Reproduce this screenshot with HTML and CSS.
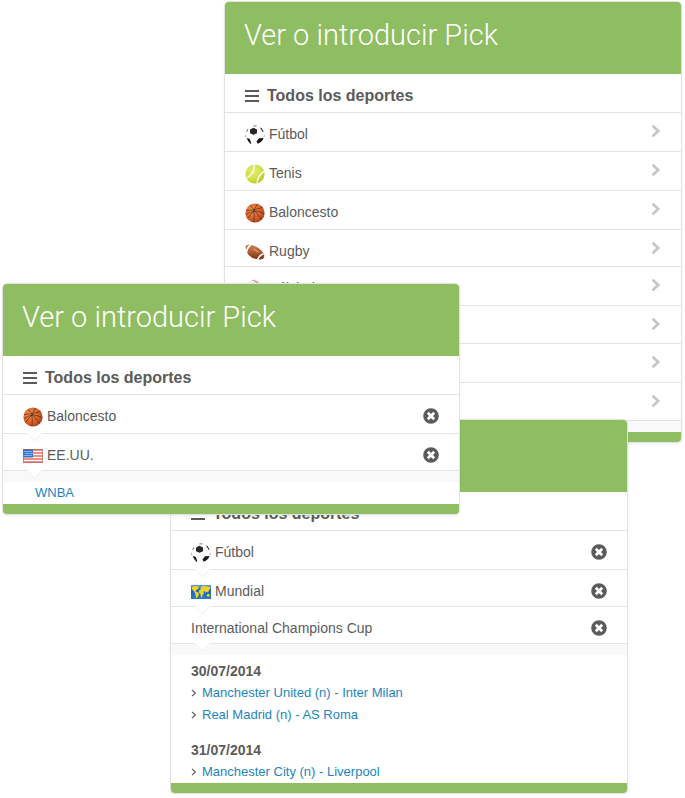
FILE: index.html
```html
<!DOCTYPE html>
<html lang="es">
<head>
<meta charset="utf-8">
<meta name="viewport" content="width=device-width, initial-scale=1">
<title>Ver o introducir Pick</title>
<link rel="stylesheet" href="styles.css">
</head>
<body>
<svg class="sprite" aria-hidden="true">
  <defs>
    <radialGradient id="g-tennis" cx=".4" cy=".35" r=".7"><stop offset="0" stop-color="#e6ee7a"/><stop offset=".7" stop-color="#cbdc3c"/><stop offset="1" stop-color="#adc02c"/></radialGradient>
    <radialGradient id="g-basket" cx=".35" cy=".35" r=".75"><stop offset="0" stop-color="#ee9550"/><stop offset=".6" stop-color="#d4602a"/><stop offset="1" stop-color="#a83a1a"/></radialGradient>
    <linearGradient id="g-rugby" x1="0" y1="0" x2="0" y2="1"><stop offset="0" stop-color="#c98258"/><stop offset=".5" stop-color="#b05c33"/><stop offset="1" stop-color="#7a2f14"/></linearGradient>
    <linearGradient id="g-sea" x1="0" y1="0" x2="0" y2="1"><stop offset="0" stop-color="#6f9fd8"/><stop offset=".4" stop-color="#1762c4"/><stop offset="1" stop-color="#2f79c4"/></linearGradient>
  </defs>
  <symbol id="i-bars" viewBox="0 0 14 12"><path d="M0 0h14v2H0zM0 5h14v2H0zM0 10h14v2H0z" fill="currentColor"/></symbol>
  <symbol id="i-chevron" viewBox="0 0 10 14"><path d="M2.4 2.4 7.2 7 2.4 11.6" fill="none" stroke="currentColor" stroke-width="2.8" stroke-linecap="round"/></symbol>
  <symbol id="i-close" viewBox="0 0 16 16"><circle cx="8" cy="8" r="7.8" fill="currentColor"/><path d="m5.8 5.8 4.4 4.4m0-4.4-4.4 4.4" stroke="#fff" stroke-width="2.8" stroke-linecap="square" fill="none"/></symbol>
  <symbol id="i-angle" viewBox="0 0 6 8"><path d="m1 .8 3.4 3.2L1 7.2" fill="none" stroke="currentColor" stroke-width="1.1"/></symbol>
  <symbol id="i-soccer" viewBox="0 0 20 20">
    <circle cx="10" cy="10" r="9.5" fill="#fcfcfc"/>
    <path d="M5 4.500 8.500 2.800l3.500 1.700v3.700L8.500 9.800 5 8.200z" fill="#262626"/>
    <path d="M7.5.9Q10-.2 12.5.9L10 1.500z" fill="#888"/>
    <path d="m1 7 2-3.6-.1 2.500zM.4 9.300l.9 3-1-.8z" fill="#666"/>
    <path d="m15 2.500 1.500.5 2.200 4-1.200-.3z" fill="#222"/>
    <path d="m1.800 12.800 3 1.200 1.500 4.500-1 .3Q2.800 17 1.800 12.800z" fill="#171717"/>
    <path d="m11.500 16.500 2.500-3.200 4.500-.3q-1.400 4.300-5.800 5.800z" fill="#171717"/>
    <path d="m19.500 9-.1 2.400-.8.8z" fill="#555"/>
  </symbol>
  <symbol id="i-tennis" viewBox="0 0 20 20">
    <circle cx="10" cy="10" r="9.6" fill="url(#g-tennis)"/>
    <path d="M2 14Q9 10.500 9.500.8M12 19.300q.5-8 7-12" fill="none" stroke="#f9fbe6" stroke-width="1.5"/>
  </symbol>
  <symbol id="i-basket" viewBox="0 0 20 20">
    <circle cx="10" cy="10" r="9.6" fill="url(#g-basket)"/>
    <path d="M1 7.500Q9 7.500 17.500 4.500M5 2Q10 8 16.500 16.500M12.500.8Q9.500 8 2.500 15.500M.8 11.500Q11 5 19.300 11M8.700 7.500Q10 13 8.800 19.300" fill="none" stroke="#54230f" stroke-opacity=".8" stroke-width=".8"/>
  </symbol>
  <symbol id="i-rugby" viewBox="0 0 20 20">
    <path d="M.6 4.100Q3 .8 10.200 4.300q7 3.600 9 8.200.8 5.500-5 4.900Q7.600 17.400 3.600 13.100.2 8.300.6 4.100z" fill="url(#g-rugby)"/>
    <path d="M5.700 2.600Q2 6 1.600 10M18.600 11.700q-4.200 1.300-5.800 5.700" fill="none" stroke="#fff" stroke-width="1.700"/>
    <path d="m8.500 7 5 3.200" stroke="#f0cdb8" stroke-width=".8"/>
  </symbol>
  <symbol id="i-baseball" viewBox="0 0 20 20">
    <circle cx="10" cy="10" r="9.5" fill="#f3efec"/>
    <path d="M7.500 1q7 2.500 11 9M1 8q6 3 8 11" fill="none" stroke="#d08a86" stroke-width="1.300"/>
  </symbol>
  <symbol id="i-usa" viewBox="0 0 20 14">
    <path d="M0 0h20v14H0z" fill="#fff"/>
    <path d="M0 1h20M0 4h20M0 7h20M0 10h20M0 13h20" stroke="#ea6a5c" stroke-width="1.500"/>
    <path d="M0 0h10v8.500H0z" fill="#2f74cc"/>
    <path d="M1.500 2.500h8M2.500 4.500h7M1.500 6.500h8" stroke="#e4eefb" stroke-width="1" stroke-dasharray="1 1"/>
    <path d="M.5.5h19v13H.5z" fill="none" stroke="#a65f62" stroke-opacity=".6"/>
  </symbol>
  <symbol id="i-world" viewBox="0 0 20 14">
    <path d="M0 0h20v14H0z" fill="url(#g-sea)"/>
    <path d="m1 2 3-1 4 .5-.8 2.300L5.500 5 4.300 6.300l2.900 1.200.8 1.700-2 3.800-1-.3-.7-4L2.700 6 1 4.200zM9.500 2.500 12 1l6.500.8 1 1.500-1.500 2-1 2.200-1.300-1-1 1.500-1.200-2-1 .8.500 1.500-1.500 2-.3 2.200-1.200-.3-.7-3.500-1.500-1 .2-2.200L10 4zM15.800 9.500l2-.7 1.200 1.700-1.200 1.200-2-.5z" fill="#f2d51c"/>
  </symbol>
</svg>

<main class="stage">
  <section class="panel panel-sports">
    <header class="panel-header"><h2>Ver o introducir Pick</h2></header>
    <h3 class="panel-title"><svg class="bars"><use href="#i-bars"/></svg>Todos los deportes</h3>
    <ul class="rows">
      <li><a class="row" href="#futbol"><svg class="ball"><use href="#i-soccer"/></svg><span>Fútbol</span><svg class="chevron"><use href="#i-chevron"/></svg></a></li>
      <li><a class="row" href="#tenis"><svg class="ball"><use href="#i-tennis"/></svg><span>Tenis</span><svg class="chevron"><use href="#i-chevron"/></svg></a></li>
      <li><a class="row" href="#baloncesto"><svg class="ball"><use href="#i-basket"/></svg><span>Baloncesto</span><svg class="chevron"><use href="#i-chevron"/></svg></a></li>
      <li><a class="row row-short" href="#rugby"><svg class="ball"><use href="#i-rugby"/></svg><span>Rugby</span><svg class="chevron"><use href="#i-chevron"/></svg></a></li>
      <li><a class="row" href="#beisbol"><svg class="ball"><use href="#i-baseball"/></svg><span>Béisbol</span><svg class="chevron"><use href="#i-chevron"/></svg></a></li>
      <li><a class="row row-medium" href="#hockey" aria-label="Hockey"><svg class="chevron"><use href="#i-chevron"/></svg></a></li>
      <li><a class="row" href="#voleibol" aria-label="Voleibol"><svg class="chevron"><use href="#i-chevron"/></svg></a></li>
      <li><a class="row row-medium" href="#balonmano" aria-label="Balonmano"><svg class="chevron"><use href="#i-chevron"/></svg></a></li>
    </ul>
    <div class="strip"></div>
    <footer class="panel-footer"></footer>
  </section>

  <section class="panel panel-matches">
    <header class="panel-header"></header>
    <h3 class="panel-title"><svg class="bars"><use href="#i-bars"/></svg>Todos los deportes</h3>
    <ul class="rows">
      <li class="row notch"><svg class="ball"><use href="#i-soccer"/></svg><span>Fútbol</span><button class="close" type="button" aria-label="Quitar Fútbol"><svg><use href="#i-close"/></svg></button></li>
      <li class="row row-short notch"><svg class="flag"><use href="#i-world"/></svg><span>Mundial</span><button class="close" type="button" aria-label="Quitar Mundial"><svg><use href="#i-close"/></svg></button></li>
      <li class="row row-short notch"><span>International Champions Cup</span><button class="close" type="button" aria-label="Quitar International Champions Cup"><svg><use href="#i-close"/></svg></button></li>
    </ul>
    <div class="strip"></div>
    <div class="matches">
      <section>
        <h4>30/07/2014</h4>
        <ul>
          <li><svg class="angle"><use href="#i-angle"/></svg><a href="#m1">Manchester United (n) - Inter Milan</a></li>
          <li><svg class="angle"><use href="#i-angle"/></svg><a href="#m2">Real Madrid (n) - AS Roma</a></li>
        </ul>
      </section>
      <section>
        <h4>31/07/2014</h4>
        <ul>
          <li><svg class="angle"><use href="#i-angle"/></svg><a href="#m3">Manchester City (n) - Liverpool</a></li>
        </ul>
      </section>
    </div>
    <footer class="panel-footer"></footer>
  </section>

  <section class="panel panel-leagues">
    <header class="panel-header"><h2>Ver o introducir Pick</h2></header>
    <h3 class="panel-title"><svg class="bars"><use href="#i-bars"/></svg>Todos los deportes</h3>
    <ul class="rows">
      <li class="row notch"><svg class="ball"><use href="#i-basket"/></svg><span>Baloncesto</span><button class="close" type="button" aria-label="Quitar Baloncesto"><svg><use href="#i-close"/></svg></button></li>
      <li class="row row-short notch"><svg class="flag"><use href="#i-usa"/></svg><span>EE.UU.</span><button class="close" type="button" aria-label="Quitar EE.UU."><svg><use href="#i-close"/></svg></button></li>
    </ul>
    <div class="strip"></div>
    <div class="leagues"><a href="#wnba">WNBA</a></div>
    <footer class="panel-footer"></footer>
  </section>
</main>
</body>
</html>
```

FILE: styles.css
```css
* { box-sizing: border-box; }

body {
  margin: 0;
  background: #fff;
  color: #5b5b5b;
  font: 14px/20px "Liberation Sans", Arial, sans-serif;
}

h2, h3, h4, ul { margin: 0; padding: 0; }
ul { list-style: none; }
a { color: #1c86c0; text-decoration: none; }
svg { display: block; flex: none; }
.sprite { position: absolute; width: 0; height: 0; }

/* Overlapping cards share one grid */
.stage {
  display: grid;
  grid-template-columns: 2px 168fr 54fr 236fr 168fr 54fr 3px;
  grid-template-rows: 1px 282px 136px auto;
  align-items: start;
}
.panel-sports { grid-area: 2 / 4 / 5 / 7; }
.panel-matches { grid-area: 4 / 3 / 5 / 6; }
.panel-leagues { grid-area: 3 / 2 / 5 / 5; }

.panel {
  isolation: isolate;
  min-width: 0;
  overflow: hidden;
  background: #fff;
  border: 1px solid #e2e2e2;
  border-radius: 5px;
  box-shadow: 0 1px 2px rgba(0, 0, 0, .08);
}
.panel-header {
  height: 72px;
  padding: 14px 19px;
  background: #8fbd61;
  color: #fff;
}
.panel-header h2 {
  font: 300 29px/38px Roboto, "Liberation Sans", sans-serif;
  white-space: nowrap;
}
.panel-title {
  display: flex;
  align-items: center;
  gap: 8px;
  height: 39px;
  padding: 5px 20px 0;
  border-bottom: 1px solid #e4e4e4;
  font-size: 16px;
  line-height: 20px;
}
.bars { width: 14px; height: 12px; }

.row {
  position: relative;
  display: flex;
  align-items: flex-start;
  gap: 4px;
  min-height: 39px;
  padding: 11px 20px 0;
  border-bottom: 1px solid #e4e4e4;
  color: inherit;
}
.row-medium { min-height: 38px; }
.row-short { min-height: 37px; }
.ball { width: 20px; height: 20px; margin-top: 1px; }
.flag { width: 20px; height: 14px; margin-top: 4px; }
.chevron { width: 10px; height: 14px; margin-left: auto; color: #c6c6c6; }
.close {
  display: grid;
  place-items: center;
  width: 16px;
  height: 20px;
  margin-left: auto;
  padding: 0;
  border: 0;
  background: none;
  color: #5b5b5b;
}
.close svg { width: 16px; height: 16px; }

.notch::after {
  content: "";
  position: absolute;
  z-index: 1;
  left: 25px;
  bottom: -6px;
  width: 12px;
  height: 12px;
  background: #fff;
  border: solid #ededed;
  border-width: 0 1px 1px 0;
  clip-path: polygon(100% 0, 100% 100%, 0 100%);
  transform: rotate(45deg);
}

.strip { height: 11px; background: #f9f9f9; }
.leagues { padding: 0 32px; font-size: 13px; line-height: 22px; }

.matches {
  display: grid;
  gap: 13px;
  padding: 5px 20px 0;
  line-height: 22px;
}
.matches h4 { font-size: 14px; }
.matches li {
  display: flex;
  align-items: center;
  gap: 5px;
  font-size: 13px;
}
.angle { width: 6px; height: 8px; }
.panel-footer { height: 10px; background: #8fbd61; }
```
